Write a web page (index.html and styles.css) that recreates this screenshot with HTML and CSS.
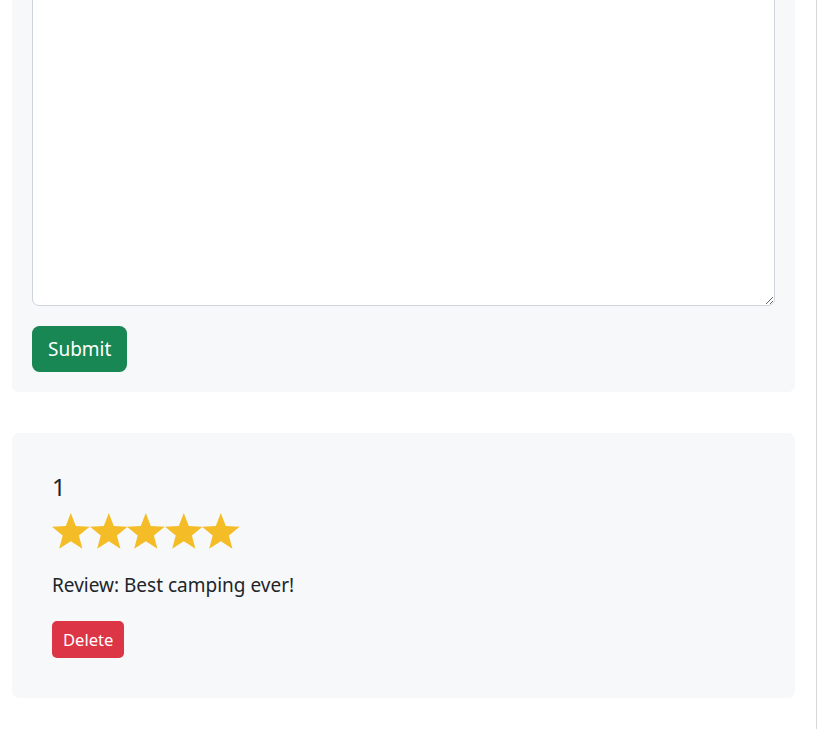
FILE: index.html
```html
<!DOCTYPE html>
<html>
<head>
<meta charset="utf-8">
<link rel="stylesheet" href="styles.css">
</head>
<body>
<div class="page">
  <div class="col">
    <form class="card form-card">
      <textarea class="field"></textarea>
      <button type="button" class="btn btn-success">Submit</button>
    </form>
    <div class="card review">
      <h5 class="title">1</h5>
      <div class="stars">
        <svg viewBox="0 0 24 22.83"><path d="M12 0L15.19 8.23L24 8.72L17.16 14.3L19.42 22.83L12 18.05L4.58 22.83L6.84 14.3L0 8.72L8.81 8.23Z"/></svg>
        <svg viewBox="0 0 24 22.83"><path d="M12 0L15.19 8.23L24 8.72L17.16 14.3L19.42 22.83L12 18.05L4.58 22.83L6.84 14.3L0 8.72L8.81 8.23Z"/></svg>
        <svg viewBox="0 0 24 22.83"><path d="M12 0L15.19 8.23L24 8.72L17.16 14.3L19.42 22.83L12 18.05L4.58 22.83L6.84 14.3L0 8.72L8.81 8.23Z"/></svg>
        <svg viewBox="0 0 24 22.83"><path d="M12 0L15.19 8.23L24 8.72L17.16 14.3L19.42 22.83L12 18.05L4.58 22.83L6.84 14.3L0 8.72L8.81 8.23Z"/></svg>
        <svg viewBox="0 0 24 22.83"><path d="M12 0L15.19 8.23L24 8.72L17.16 14.3L19.42 22.83L12 18.05L4.58 22.83L6.84 14.3L0 8.72L8.81 8.23Z"/></svg>
      </div>
      <p class="text">Review: Best camping ever!</p>
      <button type="button" class="btn btn-danger">Delete</button>
    </div>
  </div>
</div>
</body>
</html>
```
FILE: styles.css
```css
html, body {
  margin: 0;
  padding: 0;
  background: #fff;
  overflow: hidden;
}
body {
  font-family: "Noto Sans", "Open Sans", sans-serif;
  color: #212529;
  font-size: 19px;
  line-height: 1.5;
}
.page {
  width: 817px;
  min-height: 729px;
  border-right: 1px solid #d6d8db;
  box-sizing: border-box;
}
.col {
  padding: 0 20px 0 12px;
  display: flex;
  flex-direction: column;
  gap: 41px;
}
.card {
  background: #f7f8fa;
  border-radius: 7px;
  width: 783px;
  box-sizing: border-box;
}
.form-card {
  margin-top: -40px;
  padding: 20px;
  display: flex;
  flex-direction: column;
  align-items: flex-start;
  gap: 20px;
}
.field {
  display: block;
  width: 743px;
  height: 326px;
  box-sizing: border-box;
  border: 1px solid #ced4da;
  border-radius: 7px;
  background: #fff;
  margin: 0;
  font: inherit;
}
.btn {
  font-family: inherit;
  border: 1px solid transparent;
  color: #fff;
  cursor: pointer;
}
.btn-success {
  background: #198754;
  font-size: 19px;
  line-height: 28.5px;
  padding: 7.5px 15px;
  border-radius: 7.5px;
}
.btn-danger {
  background: #dc3545;
  font-size: 16.6px;
  line-height: 25.5px;
  padding: 5px 10px;
  border-radius: 5px;
}
.review {
  padding: 40px;
  display: flex;
  flex-direction: column;
  align-items: flex-start;
}
.title {
  margin: 0 0 12px;
  font-size: 24px;
  font-weight: 400;
  line-height: 1.2;
}
.stars {
  display: flex;
  height: 35.8px;
}
.stars svg {
  width: 37.6px;
  height: 35.8px;
  fill: #f4bd27;
}
.text {
  margin: 21.5px 0 21.5px;
}
```
